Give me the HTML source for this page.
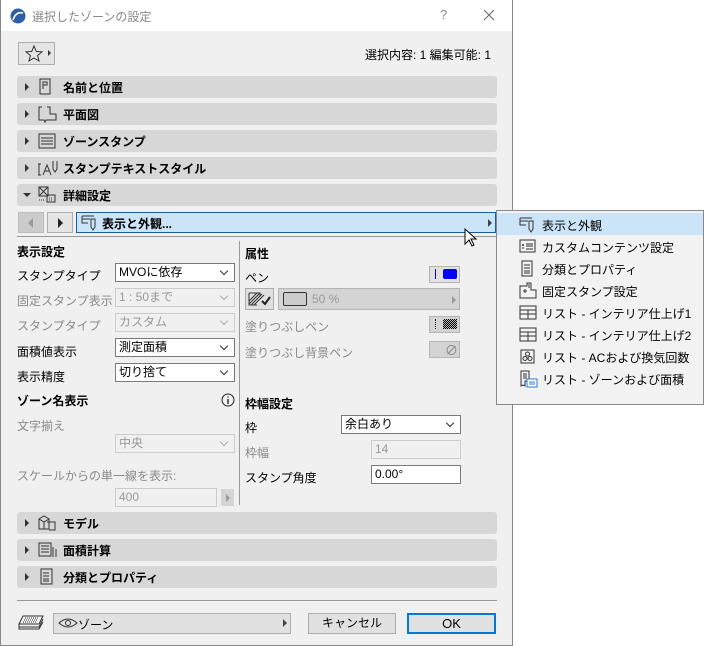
<!DOCTYPE html>
<html><head><meta charset="utf-8"><style>
*{box-sizing:border-box;margin:0;padding:0}
body{width:704px;height:646px;background:#fff;position:relative;overflow:hidden;font-family:"Liberation Sans","Noto Sans CJK JP",sans-serif;font-size:12px;color:#000}
.a{position:absolute}
#dlg{position:absolute;left:0;top:0;width:513px;height:646px;background:#f0f0f0;border:1px solid #888;border-top:none}
#title{position:absolute;left:0;top:0;width:511px;height:31px;background:#fff}
.bar{position:absolute;left:16px;width:480px;height:22px;background:#d7d7d7;border-radius:3px}
.bar .tri{position:absolute;left:8px;top:7px;width:0;height:0;border-left:4px solid #333;border-top:4px solid transparent;border-bottom:4px solid transparent}
.bar .tri.d{left:6px;top:9px;border-top:4px solid #333;border-left:4px solid transparent;border-right:4px solid transparent;border-bottom:none}
.bar .t{position:absolute;left:46px;top:3px;font-weight:bold;font-size:12px}
.bar svg{position:absolute;left:20px;top:2px}
.lbl{position:absolute;font-size:12px}
.g{color:#8a8a8a}
.b{font-weight:bold}
.dd{position:absolute;height:19px;background:#fff;border:1px solid #7a7a7a;padding-left:3px;line-height:17px;font-size:12px}
.dd.dis{background:#f0f0f0;border-color:#ccc;color:#999}
.dd:after{content:"";position:absolute;right:7px;top:4px;width:5px;height:5px;border-right:1px solid #333;border-bottom:1px solid #333;transform:rotate(45deg)}
.dd.dis:after{border-color:#aaa}
.fld{position:absolute;height:19px;background:#f0f0f0;border:1px solid #ccc;padding-left:3px;line-height:17px;color:#999}
.box{position:absolute;background:#d4d4d4;border:1px solid #b5b5b5}
.mi{position:absolute;left:0;width:206px;height:22px;font-size:12px}
.mi span{position:absolute;left:45px;top:4px}
.mi svg{position:absolute;left:22px;top:3px}
</style></head><body>
<div id="dlg">
<div id="title">
<svg class="a" style="left:9px;top:8px" width="16" height="16"><circle cx="8" cy="8" r="7.5" fill="#2c5fa8"/><path d="M3 12 Q6 3 13 5" stroke="#fff" stroke-width="1.6" fill="none"/></svg>
<div class="a" style="left:31px;top:8px;color:#888;font-size:12px">選択したゾーンの設定</div>
<div class="a" style="left:439px;top:7px;color:#888;font-size:13px">?</div>
<svg class="a" style="left:482px;top:9px" width="12" height="12"><path d="M1 1L11 11M11 1L1 11" stroke="#666" stroke-width="1"/></svg>
</div>
<div class="a" style="left:17px;top:42px;width:37px;height:23px;border:1px solid #adadad;background:#e5e5e5"></div>
<svg class="a" style="left:23px;top:44px" width="20" height="19"><path d="M10 2L12.3 7.5L18 7.8L13.6 11.5L15 17L10 14L5 17L6.4 11.5L2 7.8L7.7 7.5Z" fill="none" stroke="#333" stroke-width="1"/></svg>
<div class="a" style="left:47px;top:50px;border-left:3px solid #333;border-top:3px solid transparent;border-bottom:3px solid transparent"></div>
<div class="a" style="left:364px;top:46px;font-size:12px">選択内容: 1 編集可能: 1</div>

<div class="bar" style="top:76px"><div class="tri"></div><svg width="16" height="18"><rect x="3" y="1" width="10" height="15" fill="none" stroke="#333"/><path d="M6 4h4v3H6z M6 7v4" fill="none" stroke="#333"/></svg><div class="t">名前と位置</div></div>
<div class="bar" style="top:103px"><div class="tri"></div><svg width="20" height="18"><path d="M5 2H2v13h5l1 2 1-2h10V9h-6V2h-3" fill="none" stroke="#333"/></svg><div class="t">平面図</div></div>
<div class="bar" style="top:130px"><div class="tri"></div><svg width="20" height="18"><rect x="2" y="2" width="16" height="14" fill="none" stroke="#333"/><path d="M4 6h12M4 9h12M4 12h12" stroke="#333"/></svg><div class="t">ゾーンスタンプ</div></div>
<div class="bar" style="top:157px"><div class="tri"></div><svg width="24" height="18"><path d="M2 5v11M1 5h3M1 16h3M6 16l4-10 4 10M7.5 12h5M16 2v8l2 3 2-3V2" fill="none" stroke="#333"/></svg><div class="t">スタンプテキストスタイル</div></div>
<div class="bar" style="top:184px"><div class="tri d"></div><svg width="20" height="18"><rect x="2" y="1" width="9" height="9" fill="none" stroke="#333"/><path d="M2 1l9 9M11 1l-9 9" stroke="#333"/><rect x="10" y="9" width="8" height="7" fill="none" stroke="#333"/><path d="M12 12h4M12 14h4M2 14h6" stroke="#333" stroke-dasharray="1 1"/></svg><div class="t">詳細設定</div></div>

<div class="a" style="left:17px;top:212px;width:26px;height:21px;background:#ccc;border:1px solid #bbb"></div>
<div class="a" style="left:27px;top:218px;border-right:5px solid #999;border-top:5px solid transparent;border-bottom:5px solid transparent"></div>
<div class="a" style="left:46px;top:212px;width:26px;height:21px;background:#e5e5e5;border:1px solid #adadad"></div>
<div class="a" style="left:57px;top:218px;border-left:5px solid #222;border-top:5px solid transparent;border-bottom:5px solid transparent"></div>
<div class="a" style="left:75px;top:212px;width:420px;height:21px;background:#cce4f7;border:1px solid #1a5c9e"></div>
<svg class="a" style="left:80px;top:214px" width="18" height="18"><path d="M1 2h12M1 2v7h6M1 5h8" fill="none" stroke="#333"/><path d="M10 5h4v8l-2 3-2-3z" fill="none" stroke="#333"/></svg>
<div class="a b" style="left:101px;top:215px">表示と外観...</div>
<div class="a" style="left:487px;top:219px;border-left:4px solid #444;border-top:4px solid transparent;border-bottom:4px solid transparent"></div>
<div class="a" style="left:16px;top:236px;width:480px;height:1px;background:#999"></div>

<div class="lbl b" style="left:16px;top:243px">表示設定</div>
<div class="lbl" style="left:16px;top:267px">スタンプタイプ</div><div class="dd" style="left:114px;top:263px;width:120px">MVOに依存</div>
<div class="lbl g" style="left:16px;top:292px">固定スタンプ表示</div><div class="dd dis" style="left:114px;top:288px;width:120px">1 : 50まで</div>
<div class="lbl g" style="left:16px;top:317px">スタンプタイプ</div><div class="dd dis" style="left:114px;top:313px;width:120px">カスタム</div>
<div class="lbl" style="left:16px;top:343px">面積値表示</div><div class="dd" style="left:114px;top:338px;width:120px">測定面積</div>
<div class="lbl" style="left:16px;top:368px">表示精度</div><div class="dd" style="left:114px;top:363px;width:120px">切り捨て</div>
<div class="lbl b" style="left:16px;top:392px">ゾーン名表示</div>
<svg class="a" style="left:220px;top:393px" width="14" height="14"><circle cx="7" cy="7" r="6" fill="none" stroke="#222"/><path d="M7 6v5M7 3.5v1" stroke="#222" stroke-width="1.4"/></svg>
<div class="lbl g" style="left:16px;top:417px">文字揃え</div>
<div class="dd dis" style="left:114px;top:434px;width:120px">中央</div>
<div class="lbl g" style="left:16px;top:467px">スケールからの単一線を表示:</div>
<div class="fld" style="left:114px;top:488px;width:102px">400</div>
<div class="a" style="left:220px;top:489px;width:13px;height:17px;background:#d4d4d4"></div>
<div class="a" style="left:225px;top:494px;border-left:4px solid #999;border-top:4px solid transparent;border-bottom:4px solid transparent"></div>
<div class="a" style="left:238px;top:241px;width:1px;height:264px;background:#999"></div>

<div class="lbl b" style="left:244px;top:245px">属性</div>
<div class="lbl" style="left:244px;top:269px">ペン</div>
<div class="box" style="left:428px;top:266px;width:31px;height:17px;background:#e1e1e1"></div>
<div class="a" style="left:434px;top:269px;width:1px;height:10px;background:#00f"></div>
<div class="a" style="left:442px;top:269px;width:14px;height:10px;background:#00f;border-radius:2px"></div>
<div class="box" style="left:244px;top:288px;width:29px;height:22px;background:#e1e1e1;border-color:#adadad"></div>
<svg class="a" style="left:247px;top:291px" width="24" height="16"><path d="M1 13L12 2M3 14L14 3M6 14L16 4M1 10L9 2" stroke="#333"/><path d="M1 2h11v3M1 2v12h8" fill="none" stroke="#333"/><path d="M14 10l3 3 5-7" fill="none" stroke="#222" stroke-width="2"/></svg>
<div class="box" style="left:277px;top:288px;width:182px;height:22px;background:#d4d4d4"></div>
<div class="a" style="left:282px;top:292px;width:24px;height:14px;border:1px solid #333;border-radius:2px;background:#ccc"></div>
<div class="a" style="left:311px;top:292px;color:#999">50 %</div>
<div class="a" style="left:451px;top:296px;border-left:4px solid #999;border-top:4px solid transparent;border-bottom:4px solid transparent"></div>
<div class="lbl g" style="left:244px;top:318px">塗りつぶしペン</div>
<div class="box" style="left:428px;top:316px;width:31px;height:17px"></div>
<div class="a" style="left:434px;top:319px;width:1px;height:10px;border-left:1px dotted #000"></div>
<div class="a" style="left:442px;top:319px;width:14px;height:10px;background:repeating-conic-gradient(#000 0 25%,#bbb 0 50%) 0 0/2px 2px"></div>
<div class="lbl g" style="left:244px;top:344px">塗りつぶし背景ペン</div>
<div class="box" style="left:428px;top:341px;width:31px;height:17px"></div>
<div class="a" style="left:444px;top:340px;color:#888;font-size:13px">∅</div>
<div class="lbl b" style="left:244px;top:395px">枠幅設定</div>
<div class="lbl" style="left:244px;top:419px">枠</div><div class="dd" style="left:340px;top:415px;width:120px">余白あり</div>
<div class="lbl g" style="left:244px;top:444px">枠幅</div><div class="fld" style="left:370px;top:440px;width:90px">14</div>
<div class="lbl" style="left:244px;top:469px">スタンプ角度</div>
<div class="a" style="left:370px;top:465px;width:90px;height:19px;background:#fff;border:1px solid #7a7a7a;padding-left:3px;line-height:17px">0.00°</div>

<div class="bar" style="top:512px"><div class="tri"></div><svg width="20" height="18"><path d="M2 5l5-3 5 3v10H2zM2 5l5 3 5-3M7 8v7M10 8h8v8h-6" fill="none" stroke="#333"/></svg><div class="t">モデル</div></div>
<div class="bar" style="top:539px"><div class="tri"></div><svg width="22" height="18"><rect x="2" y="2" width="12" height="13" fill="none" stroke="#333"/><path d="M4 5h8M4 8h8M4 11h8M16 6v10M19 8v8" stroke="#333"/></svg><div class="t">面積計算</div></div>
<div class="bar" style="top:566px"><div class="tri"></div><svg width="20" height="18"><rect x="4" y="1" width="11" height="15" fill="none" stroke="#333"/><path d="M6 5h6M6 8h6M6 11h6M6 13h6" stroke="#333"/></svg><div class="t">分類とプロパティ</div></div>
<div class="a" style="left:16px;top:600px;width:480px;height:1px;background:#999"></div>

<svg class="a" style="left:17px;top:613px" width="28" height="18"><path d="M5 3h20l-4 8H1zM1 11v3h20l4-8M1 14v2h20l4-7" fill="none" stroke="#333"/><path d="M7 5h13M6 7h13M5 9h13" stroke="#333" stroke-dasharray="1 1"/></svg>
<div class="a" style="left:52px;top:613px;width:238px;height:21px;background:#e1e1e1;border:1px solid #adadad"></div>
<svg class="a" style="left:57px;top:617px" width="20" height="12"><path d="M1 6Q10-2 19 6Q10 14 1 6Z" fill="none" stroke="#333"/><circle cx="10" cy="6" r="2.5" fill="none" stroke="#333"/></svg>
<div class="a" style="left:77px;top:616px">ゾーン</div>
<div class="a" style="left:282px;top:619px;border-left:4px solid #444;border-top:4px solid transparent;border-bottom:4px solid transparent"></div>
<div class="a" style="left:307px;top:613px;width:88px;height:21px;background:#e1e1e1;border:1px solid #adadad;text-align:center;line-height:19px">キャンセル</div>
<div class="a" style="left:406px;top:613px;width:89px;height:21px;background:#e1e1e1;border:2px solid #0078d7;text-align:center;line-height:17px;font-size:13px">OK</div>
</div>

<svg class="a" style="left:464px;top:228px" width="14" height="20"><path d="M1 1v15l4-4 3 6 2-1-3-6h5z" fill="#fff" stroke="#000"/></svg>

<div class="a" style="left:496px;top:210px;width:208px;height:195px;background:#f2f2f2;border:1px solid #888">
<div class="mi" style="top:2px;background:#cce4f7"><svg width="18" height="18"><path d="M1 2h12M1 2v7h6M1 5h8" fill="none" stroke="#333"/><path d="M10 5h4v8l-2 3-2-3z" fill="none" stroke="#333"/></svg><span>表示と外観</span></div>
<div class="mi" style="top:24px"><svg width="18" height="18"><rect x="1" y="2" width="15" height="12" fill="none" stroke="#333"/><path d="M7 6h7M7 8h7M7 11h7M3 7h2M4 6v2M3 10h2" stroke="#333"/></svg><span>カスタムコンテンツ設定</span></div>
<div class="mi" style="top:46px"><svg width="18" height="18"><rect x="3" y="1" width="10" height="15" fill="none" stroke="#333"/><path d="M5 5h6M5 8h6M5 11h6M5 13h6" stroke="#333"/></svg><span>分類とプロパティ</span></div>
<div class="mi" style="top:68px"><svg width="18" height="18"><path d="M1 4h7V1h4v7h5v8H1z" fill="none" stroke="#333"/><path d="M9 3h2M9 5h2M6 7v4M4 9h4" stroke="#333"/></svg><span>固定スタンプ設定</span></div>
<div class="mi" style="top:90px"><svg width="18" height="18"><rect x="1" y="2" width="16" height="13" fill="none" stroke="#333"/><path d="M1 6h16M1 10h16M9 6v9" stroke="#333"/></svg><span>リスト - インテリア仕上げ1</span></div>
<div class="mi" style="top:112px"><svg width="18" height="18"><rect x="1" y="2" width="16" height="13" fill="none" stroke="#333"/><path d="M1 6h16M1 10h16M9 6v9" stroke="#333"/></svg><span>リスト - インテリア仕上げ2</span></div>
<div class="mi" style="top:134px"><svg width="18" height="18"><rect x="2" y="2" width="13" height="13" fill="none" stroke="#333"/><circle cx="8.5" cy="6" r="2" fill="none" stroke="#333"/><circle cx="6" cy="10.5" r="2" fill="none" stroke="#333"/><circle cx="11" cy="10.5" r="2" fill="none" stroke="#333"/></svg><span>リスト - ACおよび換気回数</span></div>
<div class="mi" style="top:156px"><svg width="20" height="20"><path d="M2 1h8v10H6v5l-2-1-2 1z" fill="none" stroke="#333"/><path d="M4 4h4M4 6h4M4 8h4" stroke="#333"/><rect x="8" y="9" width="10" height="8" fill="#fff" stroke="#2a7fd4"/><path d="M10 12h6M10 14h6" stroke="#2a7fd4"/></svg><span>リスト - ゾーンおよび面積</span></div>
</div>
</body></html>
